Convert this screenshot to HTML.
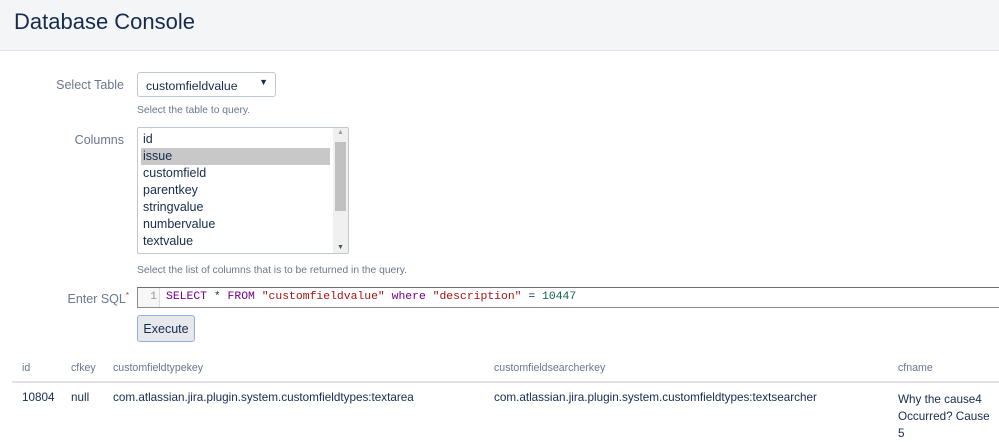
<!DOCTYPE html>
<html><head><style>
body{margin:0;width:999px;height:440px;overflow:hidden;font-family:"Segoe UI","Liberation Sans",sans-serif;color:#172b4d;background:#fff;position:relative;font-size:13px}
.hdr{position:absolute;left:0;top:0;width:999px;height:50px;background:#f4f5f7;border-bottom:1px solid #dfe1e6}
.hdr h1{position:absolute;left:14px;top:9px;margin:0;font-size:22px;font-weight:normal;color:#172b4d}
.a{position:absolute;white-space:nowrap}
.lbl{color:#6b778c;font-size:12.5px;text-align:right}
.help{color:#6b778c;font-size:10.3px}
.sel{left:137px;top:72px;width:139px;height:25px;border:1px solid #c1c7d0;border-radius:3px;box-sizing:border-box}
.list{left:137px;top:127px;width:212px;height:127px;border:1px solid #c1c7d0;border-radius:2px;box-sizing:border-box}
.item{position:absolute;left:5px;font-size:12.5px;line-height:17px}
.sb{position:absolute;right:0;top:0;width:15px;height:125px;background:#f0f0f0}
.sql{left:137px;top:287px;width:870px;height:21px;border:1px solid #8a8a8a;border-top-color:#6f6f6f;box-sizing:border-box;font-family:"Liberation Mono",monospace;font-size:11.4px}
.btn{left:137px;top:315px;width:58px;height:27px;background:#e6e8ec;border:1px solid #8fb1e6;border-radius:3px;box-sizing:border-box;text-align:center;line-height:27px;font-size:12.5px}
.th{color:#6b778c;font-size:10.6px;top:362px}
.td{font-size:11.7px;top:391px}
</style></head><body>
<div class="hdr"><h1>Database Console</h1></div>
<div class="a lbl" style="right:875px;top:78px">Select Table</div>
<div class="a sel"><span style="position:absolute;left:8px;top:6px;font-size:12.3px">customfieldvalue</span><span style="position:absolute;right:7px;top:4px;font-size:9px">▼</span></div>
<div class="a help" style="left:137px;top:105px">Select the table to query.</div>
<div class="a lbl" style="right:875px;top:133px">Columns</div>
<div class="a list">
<div style="position:absolute;left:3px;top:20px;width:189px;height:17px;background:#c8c8c8"></div>
<div class="item" style="top:3px">id</div>
<div class="item" style="top:20px">issue</div>
<div class="item" style="top:37px">customfield</div>
<div class="item" style="top:54px">parentkey</div>
<div class="item" style="top:71px">stringvalue</div>
<div class="item" style="top:88px">numbervalue</div>
<div class="item" style="top:105px">textvalue</div>
<div class="sb"><div style="position:absolute;left:2px;top:14px;width:11px;height:69px;background:#c1c1c1"></div>
<div style="position:absolute;left:4px;top:1px;font-size:7px;color:#a0a0a0">▲</div>
<div style="position:absolute;left:4px;bottom:2px;font-size:7px;color:#505050">▼</div></div>
</div>
<div class="a help" style="left:137px;top:265px">Select the list of columns that is to be returned in the query.</div>
<div class="a lbl" style="right:870px;top:291px">Enter SQL<sup style="color:#de350b;font-size:8px">*</sup></div>
<div class="a sql"><div style="position:absolute;left:0;top:0;width:22px;height:19px;background:#f7f7f7;border-right:1px solid #ddd;color:#999;text-align:right;line-height:19px;padding-right:2px;box-sizing:border-box">1</div>
<div style="position:absolute;left:28px;top:0;line-height:19px"><span style="color:#708">SELECT</span> * <span style="color:#708">FROM</span> <span style="color:#a11">"customfieldvalue"</span> <span style="color:#708">where</span> <span style="color:#a11">"description"</span> = <span style="color:#164">10447</span></div></div>
<div class="a btn">Execute</div>
<div class="a th" style="left:22px">id</div>
<div class="a th" style="left:71px">cfkey</div>
<div class="a th" style="left:113px">customfieldtypekey</div>
<div class="a th" style="left:494px">customfieldsearcherkey</div>
<div class="a th" style="left:898px">cfname</div>
<div class="a" style="left:12px;top:381px;width:987px;height:2px;background:#dfe1e6"></div>
<div class="a td" style="left:22px">10804</div>
<div class="a td" style="left:71px">null</div>
<div class="a td" style="left:113px">com.atlassian.jira.plugin.system.customfieldtypes:textarea</div>
<div class="a td" style="left:494px">com.atlassian.jira.plugin.system.customfieldtypes:textsearcher</div>
<div class="a td" style="left:898px;white-space:normal;width:95px;line-height:17px">Why the cause4 Occurred? Cause 5</div>
</body></html>
